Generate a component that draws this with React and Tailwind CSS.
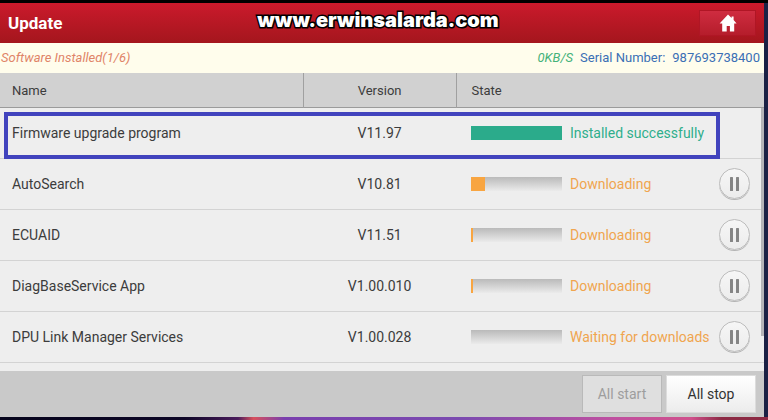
import React, { useState } from 'react';
import clsx from 'clsx';

const PACKAGES = [
    { id: 1, name: 'Firmware upgrade program', version: 'V11.97', progress: 100, status: 'installed' },
    { id: 2, name: 'AutoSearch', version: 'V10.81', progress: 15, status: 'downloading' },
    { id: 3, name: 'ECUAID', version: 'V11.51', progress: 2, status: 'downloading' },
    { id: 4, name: 'DiagBaseService App', version: 'V1.00.010', progress: 2, status: 'downloading' },
    { id: 5, name: 'DPU Link Manager Services', version: 'V1.00.028', progress: 0, status: 'waiting' },
];

const LABELS = {
    installed: 'Installed successfully',
    downloading: 'Downloading',
    waiting: 'Waiting for downloads',
};

const HomeIcon = () => (
    <svg viewBox="0 0 18 18" className="h-[18px] w-[18px] fill-white">
        <path d="M9 0.4 L12.6 4 V2.4 H14.6 V6 L17.6 9.4 H15.2 V17.4 H10.9 V12 H7.7 V17.4 H3.2 V9.4 H0.6 Z" />
    </svg>
);

const PauseButton = ({ name }) => (
    <button
        aria-label={`Pause ${name}`}
        className="flex h-[31px] w-[31px] shrink-0 items-center justify-center rounded-full border border-[#bcbcbc] bg-linear-to-b from-[#f6f6f6] to-[#ececec] shadow-[0_1px_0_#b4b4b4]"
    >
        <svg viewBox="0 0 9 14" className="h-[14px] w-[9px] fill-[#858585]">
            <rect x="0" y="0" width="3" height="14" rx="0.5" />
            <rect x="6" y="0" width="3" height="14" rx="0.5" />
        </svg>
    </button>
);

const ProgressBar = ({ value, done }) => (
    <div className="h-[14px] w-[91px] shrink-0 bg-linear-to-b from-[#bababa] to-[#ebebeb]">
        <div className={clsx('h-full', done ? 'bg-[#2bab8b]' : 'bg-[#f8a541]')} style={{ width: `${value}%` }} />
    </div>
);

const PackageRow = ({ item }) => {
    const done = item.status === 'installed';
    return (
        <tr className="h-[51px] border-b border-[#d3d3d3]">
            <td className="pt-0.5 pl-3">{item.name}</td>
            <td className="pt-0.5 text-center">{item.version}</td>
            <td className="pr-[14px] pl-[15px]">
                <div className="flex items-center gap-2">
                    <ProgressBar value={item.progress} done={done} />
                    <span className={clsx('flex-1 pt-0.5 whitespace-nowrap', done ? 'text-[#2fae8c]' : 'text-[#f0a54e]')}>
                        {LABELS[item.status]}
                    </span>
                    {!done && <PauseButton name={item.name} />}
                </div>
            </td>
        </tr>
    );
};

const App = () => {
    const [stopped, setStopped] = useState(false);

    return (
        <div className="flex h-screen flex-col bg-black pt-[3px] font-['Roboto',sans-serif] text-[#3c3c3c]">
            <div className="flex min-h-0 flex-1 flex-col border-r-4 border-[#1b2145] bg-[#eeeeee]">
                <header className="relative flex h-10 shrink-0 items-center justify-between bg-linear-to-b from-[#cb1a2c] to-[#a4161d] px-2">
                    <h1 className="pt-0.5 text-[17px] font-bold text-white">Update</h1>
                    <button
                        aria-label="Home"
                        className="flex h-[26px] w-[57px] items-center justify-center border border-[#b01625] bg-linear-to-b from-[#cf2c40] to-[#b51d2b]"
                    >
                        <HomeIcon />
                    </button>
                    {/* watermark over the title bar */}
                    <span className="absolute top-[5px] right-2 left-0 text-center font-['Inter',sans-serif] text-[20px] leading-6 font-black text-white [-webkit-text-stroke:3px_black] [paint-order:stroke_fill]">
                        www.erwinsalarda.com
                    </span>
                </header>

                <div className="flex h-[30px] shrink-0 items-center justify-between bg-[#fffdec] pr-1 pl-px text-[13px]">
                    <span className="text-[#df8468] italic">Software Installed(1/6)</span>
                    <div className="flex gap-[7px] text-[#3a6fb5]">
                        <span className="text-[#45b27a] italic">0KB/S</span>
                        <span>Serial Number:</span>
                        <span>987693738400</span>
                    </div>
                </div>

                <main className="relative min-h-0 flex-1 overflow-hidden">
                    <table className="w-full table-fixed border-collapse text-[14px]">
                        <colgroup>
                            <col />
                            <col className="w-[20%]" />
                            <col className="w-[308px]" />
                        </colgroup>
                        <thead>
                            <tr className="h-[34px] border-b border-[#9b9b9b] bg-[#d1d1d1] text-[13px]">
                                <th className="border-r border-[#a0a0a0] pt-0.5 pl-3 text-left font-normal">Name</th>
                                <th className="border-r border-[#a0a0a0] pt-0.5 font-normal">Version</th>
                                <th className="pt-0.5 pl-[15px] text-left font-normal">State</th>
                            </tr>
                        </thead>
                        <tbody>
                            {PACKAGES.map((item) => <PackageRow key={item.id} item={item} />)}
                        </tbody>
                    </table>
                    {/* callout around the finished package */}
                    <div className="pointer-events-none absolute top-[39px] right-11 left-1 h-[47px] border-4 border-[#4143bd]" />
                    {/* scroll thumb */}
                    <div className="absolute top-[35px] right-0 h-[228px] w-[3px] bg-[#b4b4b8]" />
                </main>

                <footer className="flex h-[46px] shrink-0 items-center justify-end gap-1 bg-[#c9c9c9] pr-2 text-[14px]">
                    <button
                        disabled={!stopped}
                        onClick={() => setStopped(false)}
                        className="h-[38px] w-20 border border-[#b9b9b9] bg-[#dfdfdf] text-[#9d9d9d]"
                    >
                        All start
                    </button>
                    <button
                        onClick={() => setStopped(true)}
                        className="h-[38px] w-[90px] border border-[#dcdcdc] bg-linear-to-b from-white to-[#ececec] text-[#333333]"
                    >
                        All stop
                    </button>
                </footer>
            </div>
            {/* wallpaper showing under the window */}
            <div className="h-[3px] shrink-0 bg-[linear-gradient(to_right,#06041c_0%,#0d0626_24%,#4a1c5c_31%,#d8505c_33%,#7a3fae_37%,#7b4bb0_60%,#c050a0_80%,#d0508c_90%,#8c2a44_94%,#8c2a44_100%)]" />
        </div>
    );
};

export default App;
